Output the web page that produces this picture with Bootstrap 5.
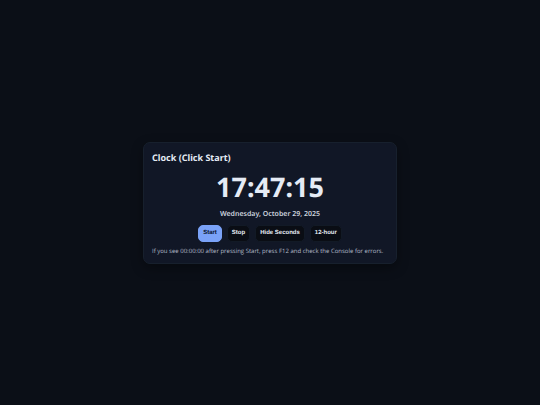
<!DOCTYPE html>
<html lang="en">
<head>
<meta charset="utf-8">
<meta name="viewport" content="width=device-width, initial-scale=1">
<title>Clock</title>
<link href="https://cdn.jsdelivr.net/npm/bootstrap@5.3.0/dist/css/bootstrap.min.css" rel="stylesheet">
<style>
  body { background: #0b0f17; color: #e5ebf5; font-family: "Noto Sans", sans-serif; text-rendering: geometricPrecision; }
  .clock-card { --bs-card-bg: #111726; --bs-card-color: #e5ebf5; --bs-card-border-color: #17202d; --bs-card-border-radius: 7px;
    width: 100%; max-width: 254px; box-shadow: 0 4px 12px rgba(0, 0, 0, .35); }
  .clock-body { padding: 8px; }
  .clock-title { font-size: 9px; line-height: 14px; margin-bottom: 3px; }
  .clock-time { font-size: 27px; line-height: 38px; font-variant-numeric: tabular-nums; }
  .clock-date { font-size: 7px; line-height: 10px; margin: 4px 0 5px; color: #cbd2dd; }
  .clock-actions { gap: 5px; }
  .clock-btn { --bs-btn-font-size: 6px; --bs-btn-line-height: 9px; --bs-btn-font-weight: 700; --bs-btn-padding-x: 4px; --bs-btn-padding-y: 3px;
    --bs-btn-border-radius: 5px; --bs-btn-font-family: "Liberation Sans", sans-serif; line-height: 9px;
    --bs-btn-color: #e5ebf5; --bs-btn-bg: #0a0d14; --bs-btn-border-color: #121a26;
    --bs-btn-hover-color: #ffffff; --bs-btn-hover-bg: #141c28; --bs-btn-hover-border-color: #263042; text-rendering: inherit; }
  .clock-start { --bs-btn-color: #0b1530; --bs-btn-bg: #7aa2f7; --bs-btn-border-color: #7aa2f7;
    --bs-btn-hover-color: #0b1530; --bs-btn-hover-bg: #8fb1f9; --bs-btn-hover-border-color: #8fb1f9; }
  .clock-note { font-family: "Open Sans", "Noto Sans", sans-serif; font-size: 6px; line-height: 8px; font-weight: 500; margin-top: 5px; color: #b4bcc9; }
</style>
</head>
<body>
<main class="min-vh-100 d-flex align-items-center justify-content-center">
  <section class="card clock-card">
    <div class="clock-body">
      <h1 class="clock-title fw-bold">Clock (Click Start)</h1>
      <div class="clock-time fw-bold text-center" id="time">17:47:15</div>
      <div class="clock-date fw-semibold text-center">Wednesday, October 29, 2025</div>
      <div class="clock-actions d-flex flex-wrap justify-content-center">
        <button type="button" class="btn clock-btn clock-start">Start</button>
        <button type="button" class="btn clock-btn">Stop</button>
        <button type="button" class="btn clock-btn">Hide Seconds</button>
        <button type="button" class="btn clock-btn">12-hour</button>
      </div>
      <p class="clock-note mb-0">If you see 00:00:00 after pressing Start, press F12 and check the Console for errors.</p>
    </div>
  </section>
</main>
<script src="https://cdn.jsdelivr.net/npm/bootstrap@5.3.0/dist/js/bootstrap.bundle.min.js"></script>
</body>
</html>
